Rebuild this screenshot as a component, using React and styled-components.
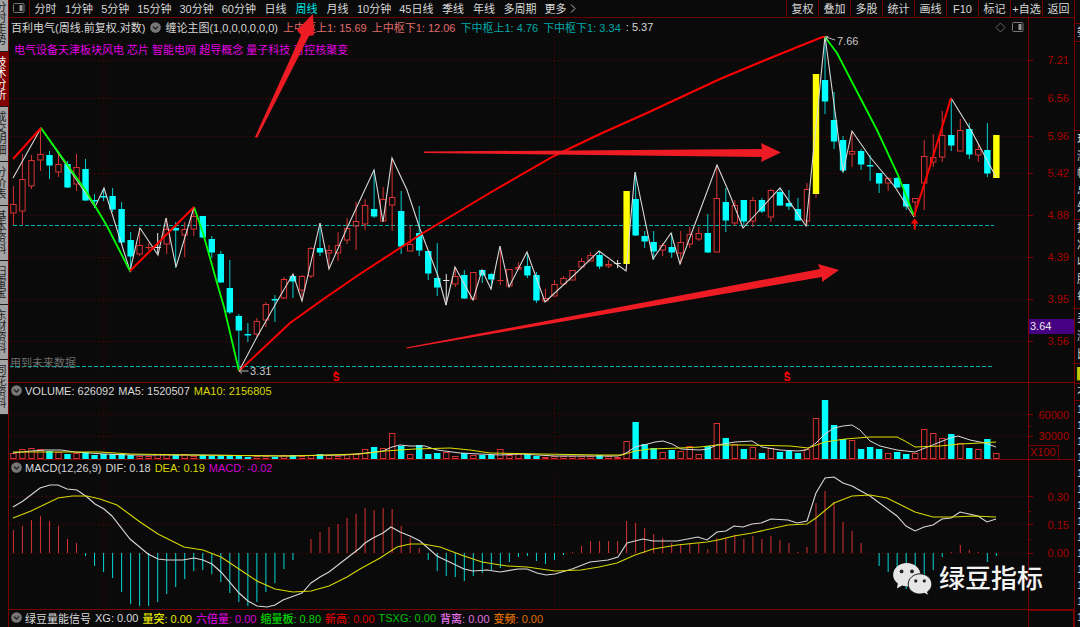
import styled, { createGlobalStyle } from 'styled-components';

const GlobalStyle = createGlobalStyle`
  * {
    box-sizing: border-box;
  }
  body {
    margin: 0;
    background: #0a0a0a;
    font-family: "Liberation Sans", "Noto Sans CJK SC", sans-serif;
    font-size: 11px;
    overflow: hidden;
  }
  button {
    font: inherit;
    color: inherit;
    background: none;
    border: none;
    padding: 0;
  }
`;

const Shell = styled.div`
  position: relative;
  display: flex;
  min-height: 100vh;
  overflow: hidden;
  color: #d8d8d8;
`;

const SideTabs = styled.nav`
  width: 8px;
  flex: none;
  display: flex;
  flex-direction: column;
`;

const SideTab = styled.button`
  display: flex;
  justify-content: flex-end;
  width: 8px;
  padding: 5px 1px 5px 0;
  overflow: hidden;
  border-bottom: 1px solid #1a1a1a;
  background: ${(props) => (props.$active ? '#800000' : '#a4a4a4')};
  color: ${(props) => (props.$active ? '#fff' : '#222')};
  &:first-child {
    padding-top: 2px;
  }
`;

const Vertical = styled.span`
  flex: none;
  width: 12px;
  line-height: 11px;
  word-break: break-all;
  text-align: center;
`;

const Main = styled.main`
  flex: 1;
  min-width: 0;
  display: flex;
  flex-direction: column;
  border-left: 1px solid #7a0000;
`;

const Toolbar = styled.div`
  display: flex;
  height: 18px;
  flex: none;
  border-bottom: 1px solid #6a0000;
`;

const LayoutButton = styled.button`
  width: 21px;
  display: flex;
  align-items: center;
  justify-content: center;
  padding-bottom: 2px;
  border-right: 1px solid #6a0000;
`;

const Periods = styled.div`
  display: flex;
  flex: 1;
`;

const Period = styled.button`
  min-width: 31px;
  padding: 0 4px;
  line-height: 16px;
  white-space: nowrap;
  color: ${(props) => (props.$active ? '#00e5e5' : '#d8d8d8')};
`;

const More = styled(Period)`
  display: flex;
  align-items: center;
  gap: 3px;
`;

const Tool = styled.button`
  width: 32px;
  line-height: 16px;
  white-space: nowrap;
  border-left: 1px solid #6a0000;
`;

const Panel = styled.section`
  display: grid;
  grid-template-columns: minmax(0, 1fr) 46px;
  border-bottom: 1px solid #7a0000;
`;

const PanelBody = styled.div`
  position: relative;
  min-width: 0;
`;

const Header = styled.div`
  display: flex;
  align-items: center;
  gap: ${(props) => (props.$tight ? 4 : 5)}px;
  height: ${(props) => props.$height || 15}px;
  padding: 0 4px 0 2px;
  white-space: nowrap;
`;

const Value = styled.span`
  color: ${(props) => props.$color || '#d8d8d8'};
  font-weight: ${(props) => (props.$strong ? 500 : 400)};
`;

const Fold = styled.button`
  display: flex;
  width: 11px;
  height: 11px;
  margin-right: -1px;
`;

const HeaderTools = styled.div`
  display: flex;
  align-items: center;
  gap: 6px;
  margin-left: auto;
`;

const Concepts = styled.p`
  position: absolute;
  left: 5px;
  top: 24px;
  margin: 0;
  line-height: 16px;
  white-space: nowrap;
  color: #e000e0;
`;

const FutureNote = styled.p`
  position: absolute;
  left: 1px;
  bottom: 11px;
  margin: 0;
  line-height: 16px;
  color: #6e6e6e;
`;

const Axis = styled.div`
  position: relative;
  border-left: 1px solid #7a0000;
`;

const Plot = styled.svg`
  display: block;
  width: 100%;
  height: auto;
`;

const PriceTag = styled.span`
  position: absolute;
  left: 0;
  right: 0;
  top: 301px;
  height: 15px;
  padding-left: 1px;
  line-height: 14px;
  background: #460082;
  color: #e8e8e8;
`;

const Footer = styled.footer`
  display: grid;
  grid-template-columns: minmax(0, 1fr) 46px;
  flex: 1;
`;

const FooterBox = styled.div`
  border: 1px solid #7a0000;
  border-width: 1px 1px 0 1px;
`;

const QuoteStrip = styled.aside`
  width: 6px;
  flex: none;
  overflow: hidden;
  border-left: 1px solid #7a0000;
`;

const QuoteGroup = styled.div`
  height: ${(props) => props.$height}px;
  padding-left: 2px;
  line-height: ${(props) => props.$line || 17}px;
  border-bottom: 1px solid #7a0000;
  overflow: hidden;
  color: ${(props) => props.$color || '#d8d8d8'};
`;

const QuoteChar = styled.div`
  width: 12px;
`;

const Arrows = styled.svg`
  position: absolute;
  left: 0;
  top: 0;
  width: 100%;
  height: auto;
  pointer-events: none;
`;

const Watermark = styled.div`
  position: absolute;
  right: 37px;
  bottom: 29px;
  display: flex;
  align-items: center;
  gap: 7px;
  font-size: 26px;
  font-weight: 500;
  line-height: 40px;
  color: #f4f4f4;
`;

const RED = '#d83232';
const CYAN = '#00ffff';

const sideTabs = ['分时走势', '技术分析', '成交明细', '分价表', '基本资料', '扫雷宝', '东财资料', '同花资料'];

const periods = [
  '分时', '1分钟', '5分钟', '15分钟', '30分钟', '60分钟', '日线', '周线',
  '月线', '10分钟', '45日线', '季线', '年线', '多周期',
];

const tools = ['复权', '叠加', '多股', '统计', '画线', 'F10', '标记', '+自选', '返回'];

// kind, body top, body bottom, high, low
// r: hollow red, c: solid cyan, w: flat, y: signal bar
const candles = [
  ['r', 204, 213, 186, 225], ['r', 179, 211, 154, 225], ['r', 160, 186, 155, 189], ['r', 154, 160, 128, 171],
  ['c', 155, 165, 151, 178], ['r', 164, 172, 153, 177], ['c', 164, 187, 161, 187], ['r', 167, 184, 154, 191],
  ['c', 169, 200, 159, 200], ['c', 200, 201, 194, 207], ['c', 196, 197, 188, 200], ['c', 196, 209, 188, 211],
  ['c', 209, 242, 202, 244], ['c', 240, 256, 232, 271], ['r', 245, 254, 228, 256], ['r', 247, 247, 243, 250],
  ['w', 247, 247, 233, 253], ['r', 229, 244, 218, 254], ['c', 228, 230, 222, 267], ['r', 229, 235, 222, 257],
  ['r', 216, 229, 207, 236], ['c', 216, 237, 216, 237], ['c', 239, 252, 236, 257], ['c', 254, 282, 251, 282],
  ['c', 288, 312, 260, 313], ['c', 316, 330, 314, 370], ['c', 334, 335, 323, 341], ['r', 321, 334, 318, 337],
  ['r', 304, 320, 302, 327], ['c', 299, 300, 295, 321], ['r', 279, 298, 277, 299], ['c', 276, 281, 274, 297],
  ['r', 276, 290, 275, 301], ['r', 248, 276, 247, 278], ['c', 248, 252, 223, 255], ['r', 250, 253, 245, 269],
  ['r', 245, 253, 232, 261], ['r', 228, 240, 218, 244], ['r', 221, 226, 202, 250], ['r', 205, 224, 199, 230],
  ['c', 209, 216, 170, 217], ['r', 199, 221, 187, 221], ['r', 197, 205, 158, 231], ['c', 211, 246, 191, 253],
  ['r', 244, 251, 226, 251], ['c', 233, 250, 206, 255], ['c', 251, 273, 251, 279], ['c', 278, 287, 243, 295],
  ['w', 280, 280, 274, 305], ['r', 276, 284, 267, 287], ['c', 275, 298, 270, 298], ['r', 272, 299, 272, 299],
  ['c', 270, 275, 270, 282], ['c', 274, 279, 273, 288], ['r', 280, 280, 246, 285], ['r', 269, 286, 269, 286],
  ['r', 267, 269, 262, 270], ['c', 266, 275, 253, 277], ['c', 275, 300, 272, 302], ['r', 298, 301, 289, 301],
  ['r', 284, 296, 280, 296], ['r', 278, 284, 276, 284], ['r', 270, 280, 270, 280], ['r', 261, 267, 258, 268],
  ['r', 255, 261, 252, 261], ['c', 255, 266, 251, 268], ['r', 264, 266, 260, 268], ['w', 263, 263, 260, 268],
  ['y', 191, 264, 191, 270], ['c', 199, 235, 172, 235], ['c', 236, 241, 231, 247], ['c', 242, 251, 231, 259],
  ['r', 245, 250, 243, 256], ['c', 247, 252, 233, 257], ['r', 242, 253, 231, 264], ['r', 234, 244, 227, 248],
  ['r', 233, 239, 227, 241], ['c', 233, 252, 214, 252], ['r', 198, 252, 165, 252], ['c', 202, 220, 188, 231],
  ['r', 205, 223, 200, 226], ['c', 200, 221, 200, 225], ['r', 200, 221, 197, 227], ['c', 200, 211, 198, 212],
  ['r', 190, 217, 189, 222], ['c', 192, 205, 188, 205], ['c', 203, 206, 190, 209], ['c', 209, 220, 198, 220],
  ['r', 189, 221, 183, 226], ['y', 74, 194, 74, 198], ['c', 80, 101, 36, 113], ['c', 120, 141, 92, 148],
  ['c', 140, 170, 136, 172], ['r', 151, 154, 132, 167], ['c', 151, 164, 149, 169], ['c', 165, 166, 155, 180],
  ['c', 173, 183, 173, 192], ['r', 178, 183, 177, 191], ['c', 178, 187, 177, 187], ['c', 184, 206, 184, 209],
  ['r', 198, 202, 198, 217], ['r', 156, 183, 140, 210], ['r', 157, 162, 134, 167], ['r', 135, 157, 111, 162],
  ['c', 135, 145, 98, 150], ['r', 130, 151, 119, 151], ['c', 129, 154, 123, 158], ['r', 149, 155, 144, 162],
  ['c', 150, 173, 123, 176], ['y', 135, 178, 135, 178],
];

const volumeTops = [
  453, 449, 448, 449, 451, 452, 454, 453, 452, 455, 454, 454, 454, 455, 456, 456, 454, 454, 455, 454,
  456, 455, 456, 456, 456, 456, 457, 456, 456, 457, 455, 455, 456, 455, 454, 455, 456, 454, 454, 449,
  447, 448, 433, 446, 454, 445, 454, 453, 452, 456, 453, 455, 455, 455, 449, 455, 454, 454, 456, 457,
  456, 456, 456, 456, 456, 455, 456, 457, 441, 422, 444, 448, 452, 450, 451, 446, 454, 446, 423, 438,
  444, 449, 447, 453, 448, 452, 451, 453, 449, 418, 400, 425, 439, 440, 449, 447, 449, 453, 452, 454,
  453, 429, 433, 438, 434, 443, 448, 449, 439, 453,
];

const MACD_ZERO = 553;
const macdEnds = [
  530, 526, 520, 516, 521, 526, 539, 543, 556, 566, 572, 578, 592, 604, 606, 606, 602, 594, 587, 579,
  571, 570, 574, 582, 593, 602, 606, 602, 592, 583, 569, 560, 553, 539, 532, 527, 524, 518, 514, 508,
  510, 508, 509, 526, 538, 548, 560, 571, 576, 577, 581, 576, 573, 570, 568, 562, 557, 556, 561, 564,
  560, 555, 552, 546, 541, 541, 541, 541, 521, 523, 528, 534, 538, 543, 544, 543, 543, 549, 538, 538,
  535, 539, 536, 539, 536, 540, 543, 552, 547, 503, 491, 502, 522, 531, 543, 553, 566, 572, 580, 589,
  591, 580, 570, 557, 552, 545, 550, 552, 562, 556,
];

const zigzag =
  '13,178 41,128 95,207 104,188 130,271 140,228 158,255 166,218 176,267 194,207';
const zigzag2 =
  '239,371 257,337 275,305 293,274 302,301 320,223 329,269 347,228 374,170 383,222 392,158 407,190 420,229 438,276 446,305 455,267 473,300 482,270 491,289 500,246 509,287 527,252 545,302 572,277 599,251 626,271 635,172 653,259 671,233 680,264 717,165 728,190 743,228 780,188 806,226 825,36 843,172 852,131 870,157 895,187 914,217';
const redTrend =
  '239,371 290,323 325,298 360,274 423,233 493,191 554,156 600,134 647,113 720,79 763,61 800,46 825,36';
const ma5 =
  '13,453 31,451 46,450 61,450 75,452 104,454 130,455 194,455 280,456 345,455 366,453 383,451 392,447 400,445 410,446 425,446 437,450 460,453 500,455 520,454 555,456 600,456 618,456 626,453 635,447 644,445 655,442 663,441 672,444 681,449 700,450 708,449 717,445 735,442 752,441 762,447 780,450 798,451 806,450 816,443 825,434 834,428 843,426 852,425 860,430 870,441 880,446 897,450 915,452 925,448 935,444 950,438 958,436 970,440 985,443 996,447';
const ma10 =
  '13,452 60,452 100,452 130,454 190,455 290,456 360,454 385,451 415,449 450,448 470,450 490,453 540,454 600,455 622,455 635,451 650,449 680,448 700,447 717,445 745,445 790,446 808,448 825,442 845,439 870,437 897,437 905,441 915,447 940,446 960,444 980,443 996,442';
const dif =
  '13,507 23,501 40,488 50,485 58,485 67,489 77,490 87,497 95,504 104,509 112,516 130,539 148,554 158,559 167,560 183,560 194,558 203,560 212,564 221,572 239,593 248,601 257,606 267,607 275,605 283,600 302,593 311,583 320,577 329,572 347,558 360,548 365,543 373,538 383,533 391,527 400,532 410,536 420,541 437,556 464,569 473,571 487,570 500,572 518,569 527,569 537,573 546,575 555,574 572,569 590,562 608,560 618,557 627,543 635,541 643,539 653,541 677,541 698,537 707,540 717,532 726,531 734,526 743,527 752,524 761,523 771,519 788,520 797,523 807,521 816,493 825,478 834,477 843,483 852,486 870,496 897,516 906,526 915,531 924,527 933,525 942,519 951,518 960,512 969,514 978,516 987,522 996,519';
const dea =
  '13,518 31,511 58,498 72,496 87,496 100,499 117,505 140,522 158,534 176,543 184,547 203,550 221,557 239,569 257,581 275,589 293,592 311,591 329,586 347,577 360,569 380,558 397,547 410,544 423,544 440,547 464,556 482,562 507,566 527,567 555,571 581,570 599,567 617,563 635,555 653,549 677,545 707,542 718,540 734,536 752,533 788,525 807,524 816,518 834,503 852,496 870,495 887,498 897,503 915,512 933,517 953,517 973,516 996,517';

const priceTicks = [
  [60, '7.21'], [98, '6.56'], [136, '5.96'], [173, '5.42'],
  [215, '4.88'], [257, '4.39'], [299, '3.95'], [341, '3.56'],
];

const barX = (i) => 13.4 + i * 9.018;

const Grid = ({ rows, top, bottom }) => (
  <g stroke="#6c0000" strokeDasharray="1 3">
    {rows.map((y) => (
      <line key={y} x1="10" x2="1028" y1={y + 0.5} y2={y + 0.5} />
    ))}
    <line x1="104" x2="104" y1={top} y2={bottom} />
    <line x1="554.5" x2="554.5" y1={top} y2={bottom} />
  </g>
);

const Candle = ({ index, data }) => {
  const [kind, top, bottom, high, low] = data;
  const x = barX(index);
  if (kind === 'y') {
    return (
      <g>
        <line x1={x} x2={x} y1={bottom} y2={low} stroke={RED} />
        <rect x={x - 3.2} y={top} width="6.4" height={bottom - top} fill="#ffff00" />
      </g>
    );
  }
  if (kind === 'w' || top === bottom) {
    const color = kind === 'w' ? '#e8e8e8' : RED;
    return (
      <path d={`M${x} ${high}V${low}M${x - 3.2} ${top + 0.5}h6.4`} stroke={color} fill="none" />
    );
  }
  if (kind === 'c') {
    return (
      <g>
        <line x1={x} x2={x} y1={high} y2={low + 1} stroke="#00d0d0" />
        <rect x={x - 3.2} y={top} width="6.4" height={bottom - top + 0.5} fill={CYAN} />
      </g>
    );
  }
  return (
    <g stroke={RED} fill="none">
      <path d={`M${x} ${high}V${top}M${x} ${bottom}V${low}`} />
      <rect x={x - 2.7} y={top + 0.5} width="5.4" height={Math.max(bottom - top - 0.5, 1)} />
    </g>
  );
};

const FoldButton = ({ label }) => (
  <Fold aria-label={label}>
    <svg width="11" height="11" viewBox="0 0 11 11">
      <circle cx="5.5" cy="5.5" r="5.3" fill="#777" />
      <path d="M3 4.5l2.5 2.5 2.5-2.5" stroke="#222" strokeWidth="1.3" fill="none" />
    </svg>
  </Fold>
);

const SplitIcon = () => (
  <svg width="12" height="10" viewBox="0 0 12 10">
    <rect x="0.5" y="0.5" width="10.5" height="9" rx="1" fill="none" stroke="#777" />
    <rect x="6.5" y="2" width="3" height="6" fill="#999" />
  </svg>
);

const Dollar = ({ x }) => (
  <g>
    <path d={`M${x} 371l3 3h-6z`} fill="#f00" />
    <text x={x} y="381" fontSize="10" fontWeight="bold" fill="#f00" textAnchor="middle">
      S
    </text>
  </g>
);

const AxisLabel = ({ y, children }) => (
  <text x="1069" y={y + 4} fontSize="11" fill="#a80000" textAnchor="end">
    {children}
  </text>
);

const PricePanel = () => (
  <Panel>
    <PanelBody>
      <Header $height={18}>
        <Value>百利电气(周线.前复权.对数)</Value>
        <FoldButton label="主图指标" />
        <Value>缠论主图(1,0,0,0,0,0,0)</Value>
        <Value $color="#e06c6c">上中枢上1: 15.69</Value>
        <Value $color="#e06c6c">上中枢下1: 12.06</Value>
        <Value $color="#00a8a8">下中枢上1: 4.76</Value>
        <Value $color="#00a8a8">下中枢下1: 3.34</Value>
        <Value>: 5.37</Value>
        <HeaderTools>
          <svg width="11" height="11" viewBox="0 0 11 11">
            <path d="M5.5 1L10 5.5 5.5 10 1 5.5z" fill="none" stroke="#666" />
          </svg>
          <SplitIcon />
        </HeaderTools>
      </Header>
      <Plot viewBox="9 36 1019 346">
        <Grid rows={priceTicks.map(([y]) => y)} top={37} bottom={371} />
        <g stroke="#00b4b4" strokeDasharray="4 2">
          <line x1="13" x2="994" y1="225.5" y2="225.5" />
          <line x1="10" x2="994" y1="366.5" y2="366.5" />
        </g>
        {candles.map((data, i) => (
          <Candle key={i} index={i} data={data} />
        ))}
        <g fill="none" stroke="#d8d8d8" strokeWidth="1.1">
          <polyline points={zigzag} />
          <polyline points={zigzag2} />
          <polyline points="951,98 972,132 996,177" />
        </g>
        <g fill="none" stroke="#00ff00" strokeWidth="1.8">
          <polyline points="41,128 86,191 107,226 130,271" />
          <polyline points="194,207 203,233 217,283 224,307 239,371" />
          <polyline points="825,37 837,53 852,82 877,130 898,175 914,216" />
        </g>
        <g fill="none" stroke="#ff0000" strokeWidth="2">
          <polyline points="13,159 41,128" />
          <polyline points="130,271 194,207" />
          <polyline points={redTrend} />
          <polyline points="914,216 932,160 951,98" />
        </g>
        <path d="M914.7 218.5l4 5h-3v6h-2v-6h-3z" fill="#f00" />
        <path
          d="M248.500 371h-9.500m3-2.500l-3 2.500 3 2.500M835 40l-9-3m4-2l-4 2 2 4"
          stroke="#bbb"
          fill="none"
        />
        <text x="250" y="375" fontSize="11" fill="#c8c8c8">3.31</text>
        <text x="837" y="45" fontSize="11" fill="#c8c8c8">7.66</text>
        <Dollar x={336} />
        <Dollar x={787} />
      </Plot>
      <Concepts>电气设备天津板块风电 芯片 智能电网 超导概念 量子科技 可控核聚变</Concepts>
      <FutureNote>用到未来数据</FutureNote>
    </PanelBody>
    <Axis>
      <Plot viewBox="1029 18 45 364">
        {priceTicks.map(([y, label]) => (
          <g key={y}>
            <line x1="1029" x2="1033" y1={y + 0.5} y2={y + 0.5} stroke="#8a0000" />
            <AxisLabel y={y}>{label}</AxisLabel>
          </g>
        ))}
      </Plot>
      <PriceTag>3.64</PriceTag>
    </Axis>
  </Panel>
);

const VolumePanel = () => (
  <Panel>
    <PanelBody>
      <Header $tight>
        <FoldButton label="成交量指标" />
        <Value>VOLUME: 626092</Value>
        <Value>MA5: 1520507</Value>
        <Value $color="#d8d800">MA10: 2156805</Value>
      </Header>
      <Plot viewBox="9 398 1019 61">
        <Grid rows={[414, 436]} top={400} bottom={458} />
        {volumeTops.map((top, i) =>
          candles[i][0] === 'c' ? (
            <rect key={i} x={barX(i) - 3.2} y={top} width="6.4" height={459 - top} fill={CYAN} />
          ) : (
            <rect
              key={i}
              x={barX(i) - 2.7}
              y={top + 0.5}
              width="5.4"
              height={458 - top}
              fill="none"
              stroke={RED}
            />
          )
        )}
        <polyline points={ma5} fill="none" stroke="#d8d8d8" />
        <polyline points={ma10} fill="none" stroke="#e0e000" />
      </Plot>
    </PanelBody>
    <Axis>
      <Plot viewBox="1029 383 45 76">
        <path d="M1029 414.500h4M1029 426.500h2M1029 436.500h4" stroke="#8a0000" />
        <AxisLabel y={415}>60000</AxisLabel>
        <AxisLabel y={436}>30000</AxisLabel>
        <path d="M1029 445.500h29.500v13" fill="none" stroke="#7a0000" />
        <text x="1030" y="456" fontSize="11" fill="#a80000">X100</text>
      </Plot>
    </Axis>
  </Panel>
);

const MacdPanel = () => (
  <Panel>
    <PanelBody>
      <Header $tight>
        <FoldButton label="MACD指标" />
        <Value>MACD(12,26,9)</Value>
        <Value>DIF: 0.18</Value>
        <Value $color="#d8d800">DEA: 0.19</Value>
        <Value $color="#d000d0">MACD: -0.02</Value>
      </Header>
      <Plot viewBox="9 475 1019 134">
        <Grid rows={[496, 524, 553]} top={477} bottom={607} />
        {macdEnds.map((end, i) => (
          <line
            key={i}
            x1={barX(i)}
            x2={barX(i)}
            y1={MACD_ZERO}
            y2={end}
            stroke={end < MACD_ZERO ? RED : '#00d8d8'}
          />
        ))}
        <polyline points={dif} fill="none" stroke="#d8d8d8" strokeWidth="1.1" />
        <polyline points={dea} fill="none" stroke="#d8d800" strokeWidth="1.1" />
      </Plot>
    </PanelBody>
    <Axis>
      <Plot viewBox="1029 460 45 149">
        <path
          d="M1029 496.500h4M1029 511.500h2M1029 524.500h4M1029 539.500h2M1029 553.500h4"
          stroke="#8a0000"
        />
        <AxisLabel y={497}>0.30</AxisLabel>
        <AxisLabel y={525}>0.15</AxisLabel>
        <AxisLabel y={553}>0.00</AxisLabel>
      </Plot>
    </Axis>
  </Panel>
);

const signals = [
  ['XG: 0.00', '#d8d8d8'],
  ['量突: 0.00', '#e8e800'],
  ['六倍量: 0.00', '#d800d8'],
  ['缩量板: 0.80', '#00d800'],
  ['新高: 0.00', '#d80000'],
  ['TSXG: 0.00', '#00c000'],
  ['背离: 0.00', '#e070e0'],
  ['变频: 0.00', '#e07000'],
];

// height, line height, visible characters
const quoteGroups = [
  [24, 17, ''],
  [18, 17, '委'],
  [89, 17, ''],
  [89, 17, '现涨幅总外'],
  [89, 17, '换净收股每'],
  [55, 18, '买涨比'],
  [20, 18, '▌'],
  [17, 17, '不'],
  [227, 16, '11111111111111'],
];

const App = () => {
  return (
    <>
      <GlobalStyle />
      <Shell>
        <SideTabs>
          {sideTabs.map((tab) => (
            <SideTab key={tab} $active={tab === '技术分析'}>
              <Vertical>{tab}</Vertical>
            </SideTab>
          ))}
        </SideTabs>
        <Main>
          <Toolbar>
            <LayoutButton aria-label="布局">
              <SplitIcon />
            </LayoutButton>
            <Periods>
              {periods.map((period) => (
                <Period key={period} $active={period === '周线'}>
                  {period}
                </Period>
              ))}
              <More>
                更多
                <svg width="6" height="9" viewBox="0 0 6 9">
                  <path d="M1 0.500l4 4-4 4" fill="none" stroke="#bbb" />
                </svg>
              </More>
            </Periods>
            {tools.map((tool) => (
              <Tool key={tool}>{tool}</Tool>
            ))}
          </Toolbar>
          <PricePanel />
          <VolumePanel />
          <MacdPanel />
          <Footer>
            <Header $tight>
              <FoldButton label="信号指标" />
              <Value>绿豆量能信号</Value>
              {signals.map(([text, color]) => (
                <Value key={text} $color={color} $strong>
                  {text}
                </Value>
              ))}
            </Header>
            <FooterBox />
          </Footer>
        </Main>
        <QuoteStrip>
          {quoteGroups.map(([height, line, text], i) => (
            <QuoteGroup key={i} $height={height} $line={line} $color={text === '▌' && '#c8c800'}>
              {[...text].map((char, j) => (
                <QuoteChar key={j}>{char}</QuoteChar>
              ))}
            </QuoteGroup>
          ))}
        </QuoteStrip>
        <Arrows viewBox="0 0 1080 627">
          <g fill="#ed1c24">
            <path d="M255 137L301 35l-4-5L313 14l1 21-5 1L257 138z" />
            <path d="M424 151.500L762 149l-1-6 20 9.500-20 9.500 1-5-338-4z" />
            <path d="M406 347.500L820 269l-2-5 21 6-17 12v-5L407 348.500z" />
          </g>
        </Arrows>
        <Watermark>
          <svg width="40" height="34" viewBox="0 0 42 36">
            <path
              d="M15.500 1C7.500 1 1 6.500 1 13.500c0 4 2 7 5 9.300L5 28l5.500-3c1.500.500 3.500 1 5 1C23.500 26 30 20.500 30 13.500S23.500 1 15.500 1z"
              fill="#e6e6e6"
            />
            <path
              d="M29.500 12.500C22.500 12.500 17 17.500 17 23.500S22.500 34 29.500 34c1.500 0 3-.300 4.500-.800l4.500 2.300-1-4c2.800-2 4.500-4.800 4.500-8 0-6-5.500-11-12.500-11z"
              fill="#e6e6e6"
              stroke="#0a0a0a"
              strokeWidth="1"
            />
            <g fill="#222">
              <circle cx="10" cy="10" r="2" />
              <circle cx="21" cy="10" r="2" />
              <circle cx="25" cy="20" r="1.7" />
              <circle cx="34" cy="20" r="1.7" />
            </g>
          </svg>
          绿豆指标
        </Watermark>
      </Shell>
    </>
  );
};

export default App;
